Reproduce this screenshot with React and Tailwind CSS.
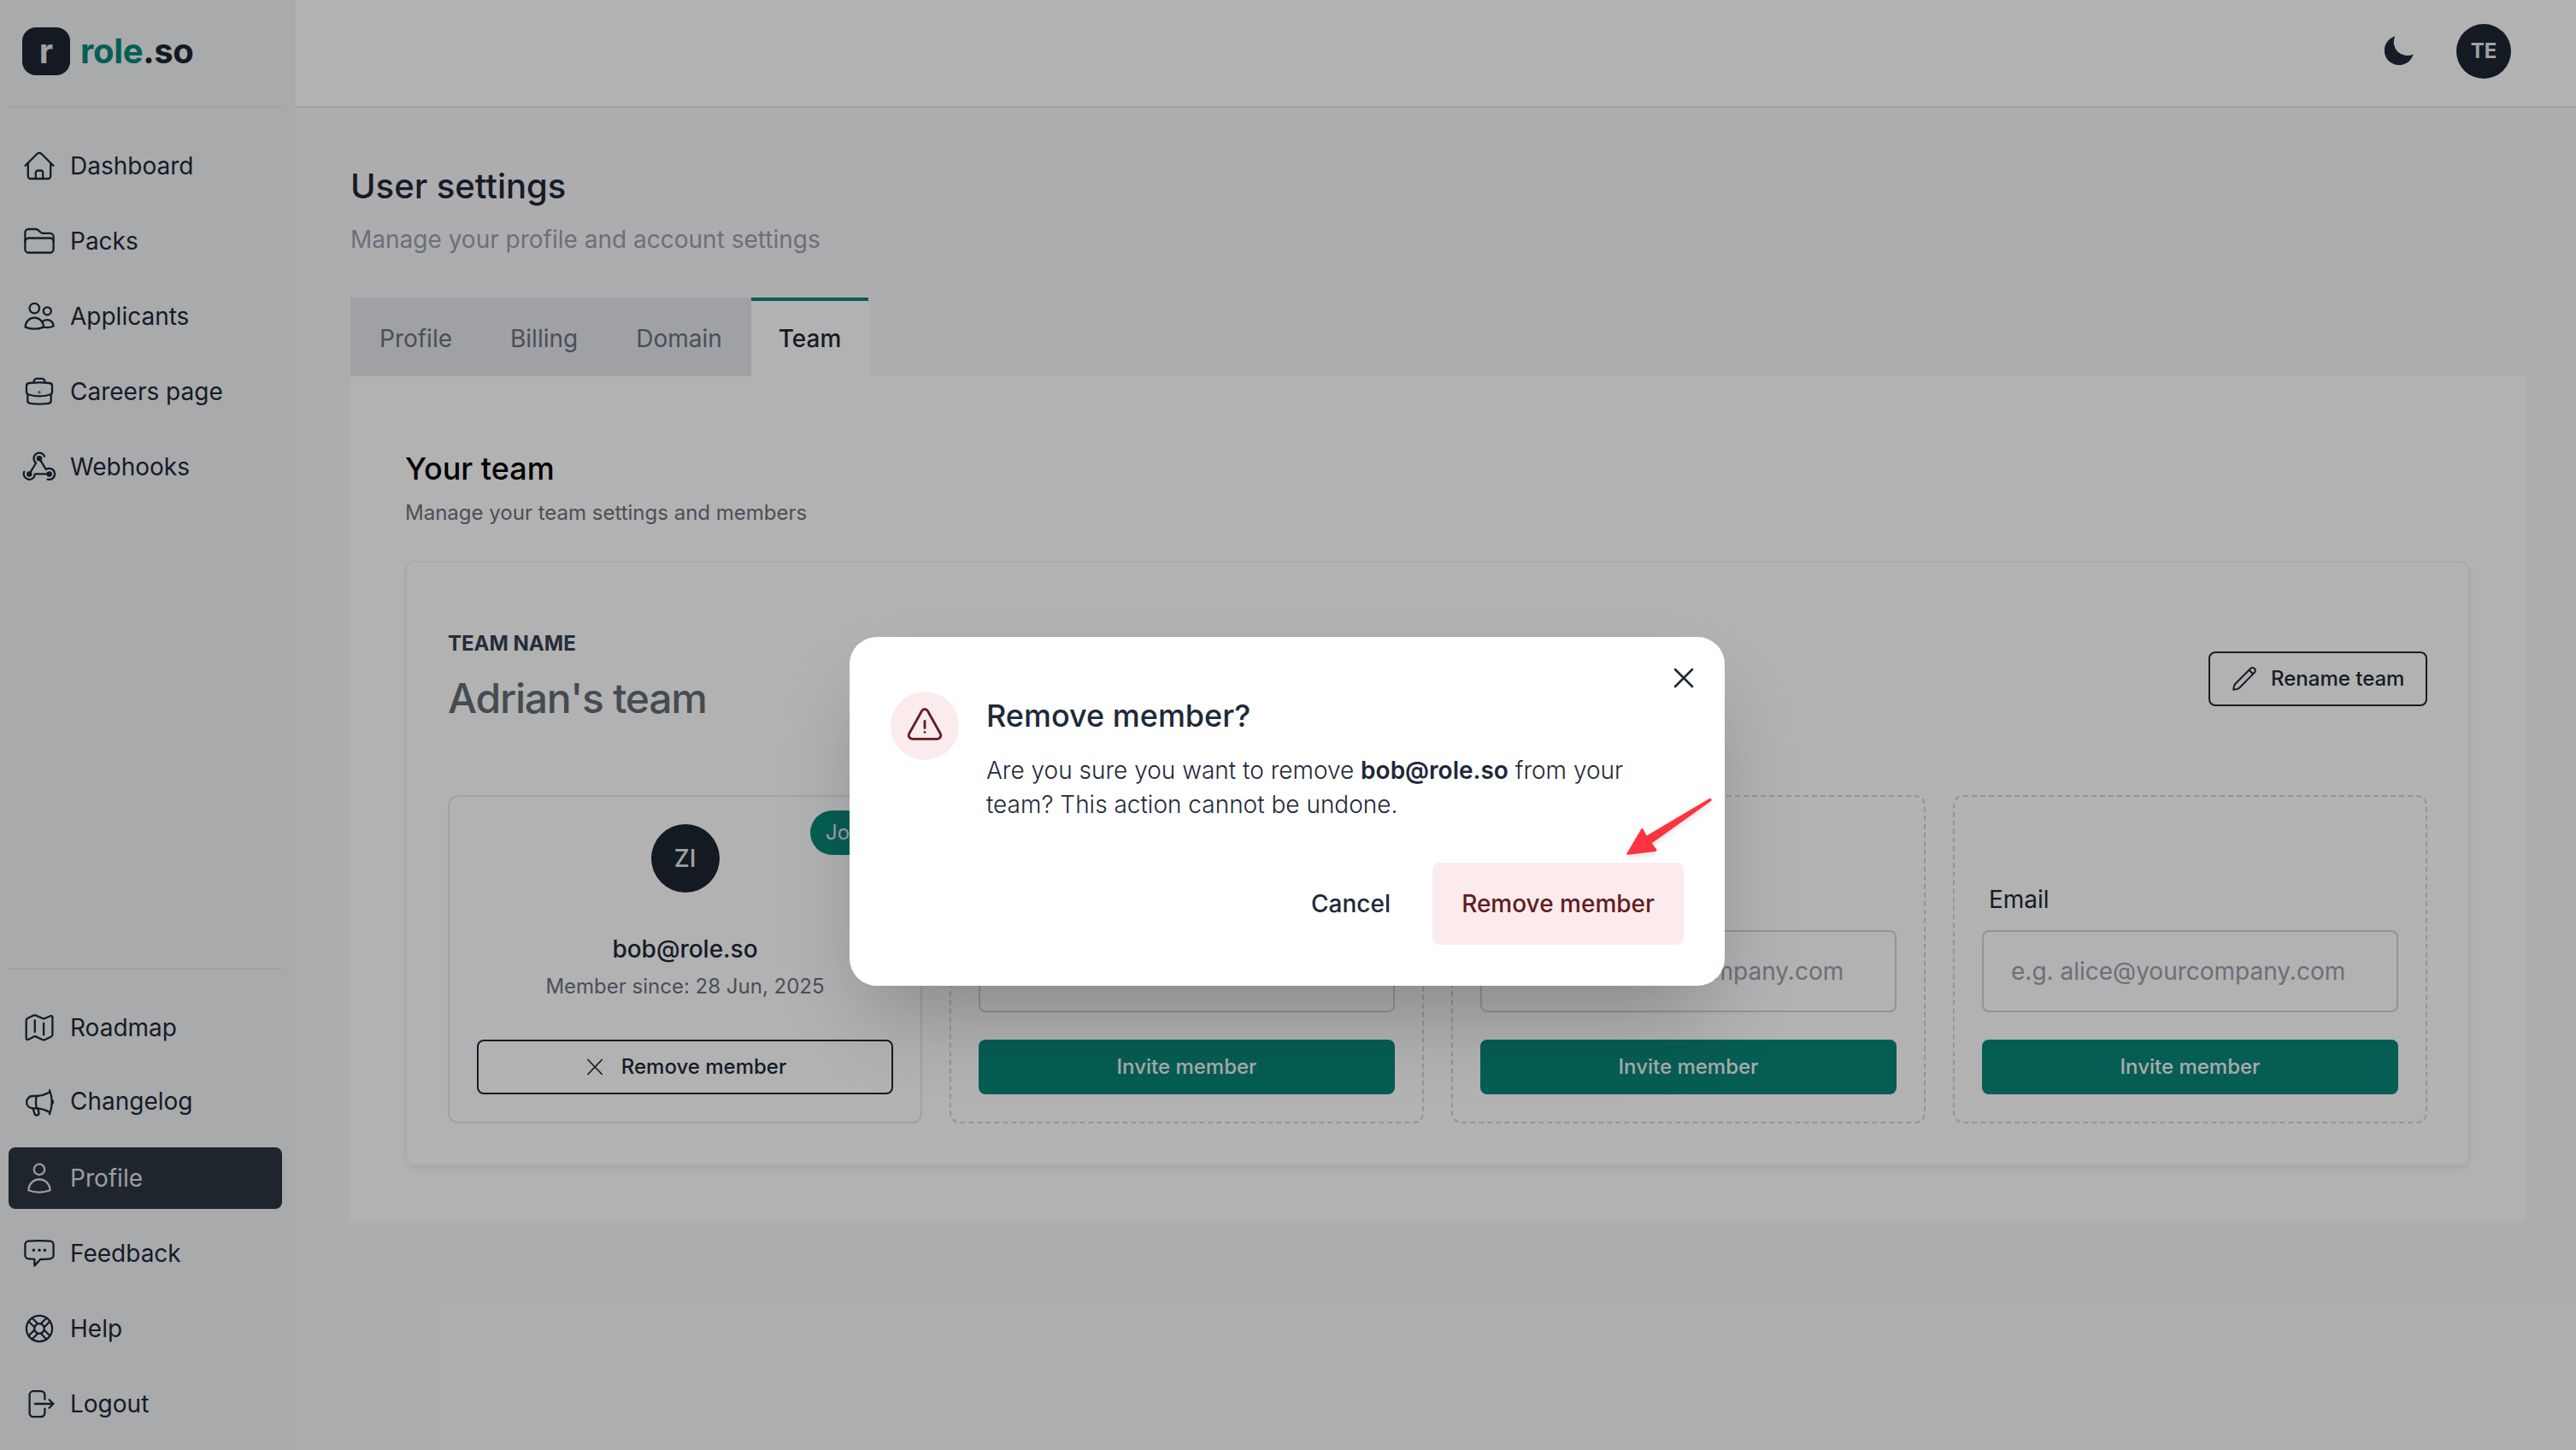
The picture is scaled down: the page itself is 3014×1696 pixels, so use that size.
const Icon = ({ children }) => (
    <svg
        viewBox="0 0 40 40"
        fill="none"
        stroke="currentColor"
        strokeWidth="2.3"
        strokeLinecap="round"
        strokeLinejoin="round"
        className="size-10"
    >
        {children}
    </svg>
);

const HomeIcon = () => (
    <Icon>
        <path d="M3.6 19.8 17.4 6a3.7 3.7 0 0 1 5.2 0l13.8 13.8" />
        <path d="M6.8 17v15a3 3 0 0 0 3 3h20.4a3 3 0 0 0 3-3V17" />
        <path d="M15.8 35v-7a2.5 2.5 0 0 1 2.5-2.5h3.4a2.5 2.5 0 0 1 2.5 2.5v7" />
    </Icon>
);

const FolderIcon = () => (
    <Icon>
        <path d="M3.4 20V10a4 4 0 0 1 4-4h8a5 5 0 0 1 3 1l3.4 2.8a5 5 0 0 0 3 1h7.8a4 4 0 0 1 4 4v14.7a4 4 0 0 1-4 4H7.4a4 4 0 0 1-4-4Z" />
        <path d="M3.4 20.5a4 4 0 0 1 4-4h25.2a4 4 0 0 1 4 4" />
    </Icon>
);

const UsersIcon = () => (
    <Icon>
        <circle cx="14.3" cy="10.6" r="5.8" />
        <circle cx="29.3" cy="13.8" r="4.5" />
        <path d="M3.6 32.6c.2-6.3 4.7-11 10.7-11S24.8 26.3 25 32.600c-6.6 2.6-14.8 2.6-21.4 0Z" />
        <path d="M23 26.400c1.7-1.500 3.900-2.300 6.300-2.300 4 0 7.200 3 7.300 7.400-3.600 1.600-7.600 2-11.600 1.200" />
    </Icon>
);

const BriefcaseIcon = () => (
    <Icon>
        <path d="M5 13.5A3.5 3.5 0 0 1 8.2 10c7.900-.8 15.700-.8 23.600 0a3.500 3.500 0 0 1 3.200 3.500v7a3.200 3.200 0 0 1-2.300 3c-8.400 2.600-17 2.600-25.400 0a3.200 3.200 0 0 1-2.300-3Z" />
        <path d="M6.3 23v7.5a3.4 3.4 0 0 0 3 3.4c7.2.9 14.2.9 21.4 0a3.4 3.4 0 0 0 3-3.4V23" />
        <path d="M13.6 9.4V8.3a3.5 3.5 0 0 1 3.5-3.5h5.8a3.5 3.5 0 0 1 3.5 3.5v1.1" />
        <circle cx="20" cy="20.8" r=".4" />
    </Icon>
);

const WebhookIcon = () => (
    <Icon>
        <path d="M20 10.2 27.8 23.1a6.5 6.5 0 1 1 1.9 11.5" />
        <path d="M31.7 28.4H14.8a6.5 6.5 0 1 1-12.500-2.600" />
        <path d="m8.3 28.4 7.900-12.900a6.5 6.5 0 1 1 9.800-7.800" />
        <circle cx="20" cy="10.2" r="2.1" fill="currentColor" />
        <circle cx="8.3" cy="28.4" r="2.1" fill="currentColor" />
        <circle cx="31.7" cy="28.4" r="2.1" fill="currentColor" />
    </Icon>
);

const MapIcon = () => (
    <Icon>
        <path d="M4.7 11.5a3 3 0 0 1 1.9-2.8l6.9-3.1a3 3 0 0 1 2.3 0L24 9.3a3 3 0 0 0 2.2 0l7-3.1a1.6 1.6 0 0 1 2.2 1.5V28a3 3 0 0 1-1.9 2.7l-7.2 3.5a3 3 0 0 1-2.3 0l-8-3.8a3 3 0 0 0-2.3 0L6.9 34a1.6 1.6 0 0 1-2.2-1.5Z" />
        <path d="M14.8 11.5v13.5M25.1 15v13.5" />
    </Icon>
);

const MegaphoneIcon = () => (
    <Icon>
        <path d="M17 14h-4.7a7.2 7.2 0 0 0 0 14.4H17c-1.4-4.8-1.4-9.6 0-14.4Z" />
        <path d="M17 14c6-.3 10.6-1.9 15.2-4.4M17 28.4c6 .4 10.6 2 15.2 4.5" />
        <path d="M32 7.2c3.5 9 3.5 19 0 28M35 19c1.4.8 1.4 3.4 0 4.2" />
        <path d="m12.6 28.8 1.9 5.9a2.5 2.5 0 0 0 4.8-1.5l-.9-4.6" />
    </Icon>
);

const UserIcon = () => (
    <Icon>
        <circle cx="20" cy="9.9" r="6.2" />
        <path d="M7.4 34.2C7.6 27 13 21.5 20 21.5s12.4 5.5 12.6 12.7c-7.6 2.9-17.6 2.9-25.2 0Z" />
    </Icon>
);

const ChatIcon = () => (
    <Icon>
        <path d="M3.4 10a4.4 4.4 0 0 1 4-4.4c8.4-.7 16.8-.7 25.2 0a4.4 4.4 0 0 1 4 4.4v12a4.4 4.4 0 0 1-4 4.4c-3.7.4-7.6.6-11.4.6l-6.8 7.4v-7.5c-2.3-.1-4.7-.3-7-.5a4.4 4.4 0 0 1-4-4.4Z" />
        <path d="M13.4 16.2h.01M20 16.2h.01M26.4 16.2h.01" strokeWidth="3.6" />
    </Icon>
);

const HelpIcon = () => (
    <Icon>
        <circle cx="20" cy="20" r="15.1" />
        <circle cx="20" cy="20" r="5.8" />
        <path d="m14.2 18.2-6.7-6.7M18.2 14.2l-6.7-6.7M21.8 14.2l6.7-6.7M25.8 18.2l6.7-6.7M25.8 21.8l6.7 6.7M21.8 25.8l6.7 6.7M18.2 25.8l-6.7 6.7M14.2 21.8l-6.7 6.7" />
    </Icon>
);

const LogoutIcon = () => (
    <Icon>
        <path d="M26.4 14.8V9.6A4.4 4.4 0 0 0 22 5.2h-9a4.4 4.4 0 0 0-4.4 4.4v21.2a4.4 4.4 0 0 0 4.4 4.4h9a4.4 4.4 0 0 0 4.4-4.4v-5.2" />
        <path d="M14.8 20h21.4M31.6 15.2l4.8 4.8-4.8 4.8" />
    </Icon>
);

const PencilIcon = () => (
    <svg
        viewBox="0 0 28 28"
        fill="none"
        stroke="currentColor"
        strokeWidth="2"
        strokeLinecap="round"
        strokeLinejoin="round"
        className="size-7"
    >
        <path d="M1.2 26.8c.1-3 .7-5.300 2-6.800L21.200 2a3.100 3.100 0 0 1 4.600 0 3.100 3.100 0 0 1 0 4.600L8 24.800c-1.500 1.300-3.800 1.900-6.800 2Z" />
        <path d="m19.6 3.7 4.500 4.500" />
    </svg>
);

const mainLinks = [
    { label: "Dashboard", icon: <HomeIcon /> },
    { label: "Packs", icon: <FolderIcon /> },
    { label: "Applicants", icon: <UsersIcon /> },
    { label: "Careers page", icon: <BriefcaseIcon /> },
    { label: "Webhooks", icon: <WebhookIcon /> },
];

const footerLinks = [
    { label: "Roadmap", icon: <MapIcon />, spacing: "mb-3.5" },
    { label: "Changelog", icon: <MegaphoneIcon />, spacing: "mb-[18px]" },
    { label: "Profile", icon: <UserIcon />, active: true },
    { label: "Feedback", icon: <ChatIcon /> },
    { label: "Help", icon: <HelpIcon /> },
    { label: "Logout", icon: <LogoutIcon />, spacing: "mb-[18px]" },
];

const NavItem = ({ label, icon, active, spacing = "mb-4" }) => (
    <a
        className={`flex h-[72px] items-center gap-4 rounded-lg pl-4 text-[28px] ${spacing} ${
            active ? "bg-[#2b3540] text-[#dfe1e6]" : "text-gray-800"
        }`}
    >
        {icon}
        {label}
    </a>
);

const Sidebar = () => (
    <aside className="flex w-[346px] shrink-0 flex-col bg-gray-100 pl-2.5 pr-4">
        <div className="flex h-[126px] items-start gap-3 border-b-2 border-gray-200 pl-4 pt-8">
            <div className="flex size-14 items-center justify-center rounded-2xl bg-[#1e2630] text-[40px] leading-none font-bold text-gray-200">
                r
            </div>
            <span className="text-[40px] leading-[56px] font-bold tracking-[-0.008em] text-[#1e2630]">
                <span className="text-[#09877a]">role</span>.so
            </span>
        </div>
        <nav className="mt-8">
            {mainLinks.map((link) => (
                <NavItem key={link.label} {...link} />
            ))}
        </nav>
        <nav className="mt-auto border-t-2 border-gray-200 pt-8">
            {footerLinks.map((link) => (
                <NavItem key={link.label} {...link} />
            ))}
        </nav>
    </aside>
);

const Header = () => (
    <header className="flex h-[126px] items-start justify-end gap-[50px] border-b-2 border-gray-200 bg-white pr-[76px] pt-7">
        <svg viewBox="0 0 34 34" className="mt-3.5 size-[34px] text-gray-800">
            <path
                d="M12.3.4A17.2 17.2 0 1 0 33.6 21.5 15.9 15.9 0 0 1 12.3.4Z"
                fill="currentColor"
            />
        </svg>
        <div className="flex size-16 items-center justify-center rounded-full bg-[#1e2630] text-2xl font-bold text-gray-200">
            TE
        </div>
    </header>
);

const Tabs = () => (
    <div className="flex h-[92px] w-fit bg-gray-200 text-[28px] text-gray-500">
        {["Profile", "Billing", "Domain"].map((tab) => (
            <div key={tab} className="flex items-center border-t-4 border-transparent px-[34px]">
                {tab}
            </div>
        ))}
        <div className="flex items-center border-t-4 border-[#09877a] bg-white px-8 font-medium text-gray-800">
            Team
        </div>
    </div>
);

const MemberCard = () => (
    <div className="relative flex h-96 flex-col items-center rounded-xl border-2 border-gray-200 p-8">
        <span className="absolute left-[422px] top-4 flex h-[52px] items-center rounded-full bg-[#09877a] px-[18px] text-2xl text-gray-200">
            Joined
        </span>
        <div className="flex size-20 shrink-0 items-center justify-center rounded-full bg-[#1e2630] text-[28px] font-medium text-gray-200">
            ZI
        </div>
        <div className="mt-[46px] text-[28px] leading-10 font-medium text-gray-800">bob@role.so</div>
        <div className="mt-1.5 text-2xl leading-9 text-gray-500">Member since: 28 Jun, 2025</div>
        <button className="mt-auto flex h-16 w-full items-center justify-center gap-[22px] rounded-lg border-2 border-gray-800 pl-1 text-2xl font-medium text-gray-800">
            <svg
                viewBox="0 0 18 20"
                stroke="currentColor"
                strokeWidth="1.7"
                strokeLinecap="round"
                className="h-5 w-[18px]"
            >
                <path d="m.9 1.5 16.4 17M17.3 1.5.9 18.500" />
            </svg>
            Remove member
        </button>
    </div>
);

const InviteCard = () => (
    <div className="flex h-96 flex-col justify-end rounded-xl border-2 border-dashed border-gray-300 p-8">
        <label className="pl-2 text-[28px] leading-10 text-gray-800">Email</label>
        <input
            className="mt-4 h-24 w-full rounded-lg border-2 border-gray-300 px-8 text-[28px] placeholder:text-gray-400"
            placeholder="e.g. alice@yourcompany.com"
        />
        <button className="mt-8 h-16 rounded-lg bg-[#098677] text-2xl font-medium text-gray-100">
            Invite member
        </button>
    </div>
);

const TeamPanel = () => (
    <section className="bg-white px-16 pb-16 pt-20">
        <h2 className="text-4xl leading-[56px] font-medium text-black">Your team</h2>
        <p className="mt-2 text-2xl leading-8 text-gray-500">Manage your team settings and members</p>
        <div className="mt-10 rounded-xl border-2 border-gray-100 px-12 pb-12 pt-20 shadow-[0_4px_6px_rgba(0,0,0,0.06)]">
            <div className="flex h-28 items-start justify-between">
                <div className="-mt-px">
                    <div className="text-2xl leading-8 font-bold text-gray-700">TEAM NAME</div>
                    <div className="mt-[18px] text-5xl leading-[60px] font-medium tracking-tight text-[#626d76]">
                        Adrian's team
                    </div>
                </div>
                <button className="mt-6 flex h-16 w-64 items-center gap-[17px] rounded-lg border-2 border-gray-800 pl-[26px] text-2xl font-medium text-gray-800">
                    <PencilIcon />
                    Rename team
                </button>
            </div>
            <div className="mt-20 grid grid-cols-4 gap-8">
                <MemberCard />
                <InviteCard />
                <InviteCard />
                <InviteCard />
            </div>
        </div>
    </section>
);

const RemoveMemberModal = () => (
    <div className="absolute inset-0 flex items-start justify-center bg-black/30 pr-0.5 pt-[745px]">
        <div className="relative flex h-[408px] w-5xl flex-col rounded-4xl bg-white px-12 pb-12 pt-16 text-gray-800 shadow-[0_50px_100px_-24px_rgba(0,0,0,0.25)]">
            <svg
                viewBox="0 0 24 24"
                stroke="currentColor"
                strokeWidth="2.6"
                strokeLinecap="round"
                className="absolute right-9 top-9 size-6"
            >
                <path d="m2 2 20 20M22 2 2 22" />
            </svg>
            <div className="flex gap-8">
                <div className="flex size-20 shrink-0 items-center justify-center rounded-full bg-[#fcebec] text-[#621d20]">
                    <svg
                        viewBox="0 0 42 42"
                        fill="none"
                        stroke="currentColor"
                        strokeWidth="2.8"
                        strokeLinecap="round"
                        strokeLinejoin="round"
                        className="size-[42px]"
                    >
                        <path d="M17.6 3.5a3.9 3.9 0 0 1 6.8 0L39.2 30a4.2 4.2 0 0 1-3.7 6.3h-29A4.2 4.2 0 0 1 2.8 30Z" />
                        <path d="M21 15.500v8M21 28.4v.01" />
                    </svg>
                </div>
                <div>
                    <h3 className="text-4xl leading-[56px] font-medium">Remove member?</h3>
                    <p className="mt-4 w-[780px] text-[28px] leading-10 font-light">
                        Are you sure you want to remove <b className="font-semibold">bob@role.so</b> from your
                        team? This action cannot be undone.
                    </p>
                </div>
            </div>
            <div className="mt-auto flex justify-end gap-4 text-[28px] font-medium">
                <button className="h-24 px-[33px]">Cancel</button>
                <button className="h-24 w-[294px] rounded-lg bg-[#fcebec] text-[#621d20]">Remove member</button>
            </div>
            {/* arrow pointing at the confirm button */}
            <svg
                viewBox="0 0 110 76"
                className="absolute left-[904px] top-[184px] h-[76px] w-[110px] text-[#fb3440] drop-shadow-md"
            >
                <path
                    d="M101.6 5.2Q104 4.300 104.600 6 105 7.300 103.200 8.500L34.700 57.300 39.800 64Q41.200 66.500 38.500 67L7 70.800Q4.500 71 5.600 69L22.200 40.800Q23.700 38.800 24.700 41L28.600 48.500Z"
                    fill="currentColor"
                />
            </svg>
        </div>
    </div>
);

const App = () => {
    return (
        <div className="relative flex h-[1696px] w-[3014px] overflow-hidden bg-[#f8f8fb] font-[Inter,sans-serif]">
            <Sidebar />
            <div className="flex-1">
                <Header />
                <main className="pl-16 pr-[60px] pt-16">
                    <h1 className="text-[40px] leading-14 font-medium text-gray-800">User settings</h1>
                    <p className="mb-12 mt-3.5 text-[28px] leading-10 text-gray-400">
                        Manage your profile and account settings
                    </p>
                    <Tabs />
                    <TeamPanel />
                </main>
            </div>
            <RemoveMemberModal />
        </div>
    );
};

export default App;
